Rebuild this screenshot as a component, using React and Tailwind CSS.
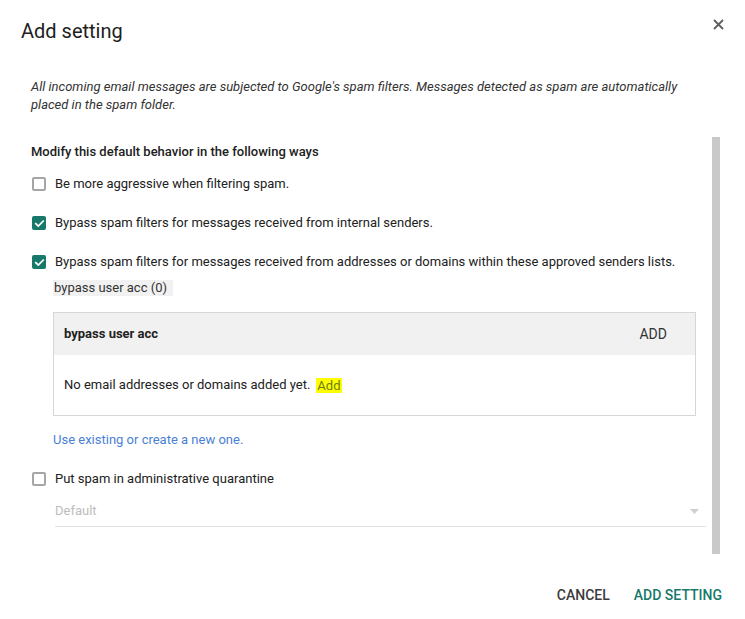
import React, { useState } from "react";

function Checkbox({ checked, onChange }) {
  return (
    <button
      onClick={onChange}
      className={
        "ml-[1px] flex h-[14px] w-[14px] shrink-0 items-center justify-center rounded-[2px] " +
        (checked ? "bg-[#17796a]" : "border-2 border-[#a6a6a6] bg-white")
      }
    >
      {checked && (
        <svg width="11" height="11" viewBox="0 0 12 12" fill="none">
          <path d="M2 6.2l2.7 2.6L10 3.4" stroke="#fff" strokeWidth="1.9" strokeLinecap="square" />
        </svg>
      )}
    </button>
  );
}

function Row({ checked, onChange, children, className = "" }) {
  return (
    <div className={"flex h-[18px] items-center gap-[9px] " + className}>
      <Checkbox checked={checked} onChange={onChange} />
      <span className="text-[13px] leading-[18px] text-[#212121]">{children}</span>
    </div>
  );
}

export default function App() {
  const [opts, setOpts] = useState({ aggressive: false, internal: true, approved: true, quarantine: false });
  const toggle = (k) => setOpts({ ...opts, [k]: !opts[k] });

  return (
    <div
      className="relative h-[619px] w-[745px] bg-white text-[#212121]"
      style={{ fontFamily: "Roboto, 'Liberation Sans', sans-serif" }}
    >
      <div className="pl-[21px] pt-[17px] text-[20px] leading-[28px] text-[#212121]">Add setting</div>
      <button className="absolute right-[21px] top-[19px]">
        <svg width="11" height="11" viewBox="0 0 11 11">
          <path d="M1 1l9 9M10 1l-9 9" stroke="#5f5f5f" strokeWidth="1.8" />
        </svg>
      </button>

      <p className="mt-[33px] pl-[31px] pr-[40px] text-[13px] italic leading-[18px] text-[#333]">
        All incoming email messages are subjected to Google's spam filters. Messages detected as spam are automatically
        placed in the spam folder.
      </p>

      <div className="ml-[31px] mt-[23px] flex h-[417px] w-[689px]">
        <div className="flex-1 overflow-hidden pr-[6px] pt-[6px]">
          <div className="text-[13px] font-medium leading-[18px] text-[#212121]">
            Modify this default behavior in the following ways
          </div>
          <Row className="mt-[14px]" checked={opts.aggressive} onChange={() => toggle("aggressive")}>
            Be more aggressive when filtering spam.
          </Row>
          <Row className="mt-[21px]" checked={opts.internal} onChange={() => toggle("internal")}>
            Bypass spam filters for messages received from internal senders.
          </Row>
          <Row className="mt-[21px]" checked={opts.approved} onChange={() => toggle("approved")}>
            Bypass spam filters for messages received from addresses or domains within these approved senders lists.
          </Row>

          <div className="ml-[22px] mt-[9px] flex">
            <span className="bg-[#f1f1f1] pl-[1px] pr-[6px] text-[13px] leading-[16px] text-[#333]">
              bypass user acc (0)
            </span>
          </div>

          <div className="ml-[22px] mr-[10px] mt-[16px] border border-[#d6d6d6]">
            <div className="flex h-[42px] items-center justify-between bg-[#f1f1f1] pl-[10px] pr-[28px]">
              <span className="text-[13px] font-bold text-[#212121]">bypass user acc</span>
              <button className="text-[14px] text-[#333]">ADD</button>
            </div>
            <div className="flex h-[60px] items-center pl-[10px] text-[13px] text-[#212121]">
              No email addresses or domains added yet.
              <span className="ml-[6px] bg-[#ffff00] px-[1px] leading-[15px] text-[#6b7d1a]">Add</span>
            </div>
          </div>

          <div className="ml-[22px] mt-[15px] text-[13px] leading-[18px] text-[#4a7fd6]">
            Use existing or create a new one.
          </div>

          <Row className="mt-[21px]" checked={opts.quarantine} onChange={() => toggle("quarantine")}>
            Put spam in administrative quarantine
          </Row>

          <div className="ml-[24px] mt-[8px] flex h-[31px] items-center justify-between border-b border-[#e3e3e3] pr-[7px]">
            <span className="text-[13px] text-[#bdbdbd]">Default</span>
            <svg width="9" height="5" viewBox="0 0 9 5">
              <path d="M0 0h9L4.5 5z" fill="#d0d0d0" />
            </svg>
          </div>
        </div>
        <div className="w-[8px] bg-[#c9c9c9]" />
      </div>

      <div className="mt-[32px] flex justify-end gap-[24px] pr-[23px] text-[14px] font-medium leading-[18px]">
        <button className="text-[#3c3c3c]">CANCEL</button>
        <button className="text-[#17796a]">ADD SETTING</button>
      </div>
    </div>
  );
}
